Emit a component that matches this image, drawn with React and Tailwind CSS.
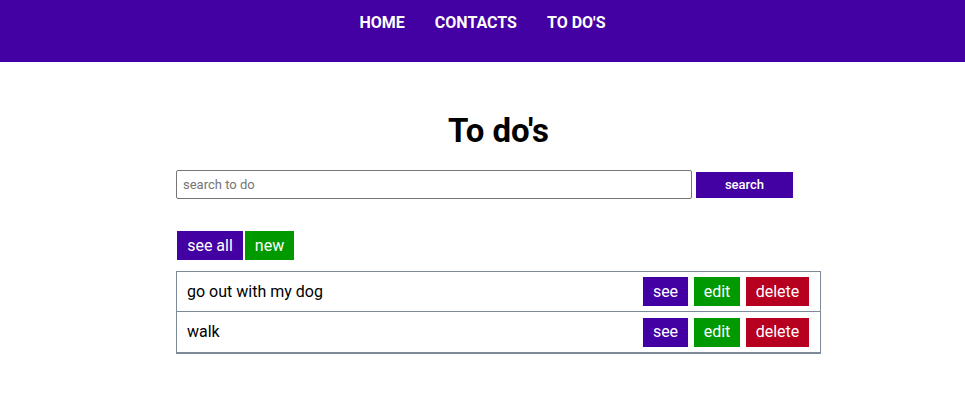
import React from "react";

const todos = ["go out with my dog", "walk"];

function NavBar() {
  return (
    <nav className="h-[62px] bg-[#4300a3] flex justify-center">
      <ul className="flex gap-[30px] pt-[13px] text-white font-bold text-[16px] leading-[20px]">
        <li>HOME</li>
        <li>CONTACTS</li>
        <li>TO DO'S</li>
      </ul>
    </nav>
  );
}

function TodoRow({ text, last }) {
  return (
    <div
      className={
        "h-[40px] flex items-center justify-between pl-[10px] pr-[11px] " +
        (last ? "" : "border-b border-[#7d8b99]")
      }
    >
      <span className="text-[16px] text-black">{text}</span>
      <div className="flex gap-[6px]">
        <button className="h-[29px] w-[45px] bg-[#4300a3] text-white text-[16px]">see</button>
        <button className="h-[29px] w-[46px] bg-[#009a00] text-white text-[16px]">edit</button>
        <button className="h-[29px] w-[63px] bg-[#b70020] text-white text-[16px]">delete</button>
      </div>
    </div>
  );
}

export default function App() {
  return (
    <div className="min-h-[420px] bg-white" style={{ fontFamily: "Roboto, 'Liberation Sans', sans-serif" }}>
      <NavBar />
      <main className="ml-[176px] w-[645px] pt-[50px]">
        <h1 className="text-center text-[33px] font-bold leading-[38px] text-black">To do's</h1>
        <div className="mt-[20px] flex items-center gap-[4px]">
          <input
            className="w-[516px] h-[29px] border border-[#767676] rounded-[2px] px-[6px] text-[13px] placeholder:text-[#757575] outline-none"
            placeholder="search to do"
          />
          <button className="w-[97px] h-[26px] bg-[#4300a3] text-white text-[13px] font-medium">search</button>
        </div>
        <div className="mt-[32px] flex gap-[2px] pl-[1px]">
          <button className="h-[29px] w-[66px] bg-[#4300a3] text-white text-[16px]">see all</button>
          <button className="h-[29px] w-[49px] bg-[#009a00] text-white text-[16px]">new</button>
        </div>
        <div className="mt-[11px] border border-[#7d8b99] border-b-2">
          {todos.map((t, i) => (
            <TodoRow key={t} text={t} last={i === todos.length - 1} />
          ))}
        </div>
      </main>
    </div>
  );
}
